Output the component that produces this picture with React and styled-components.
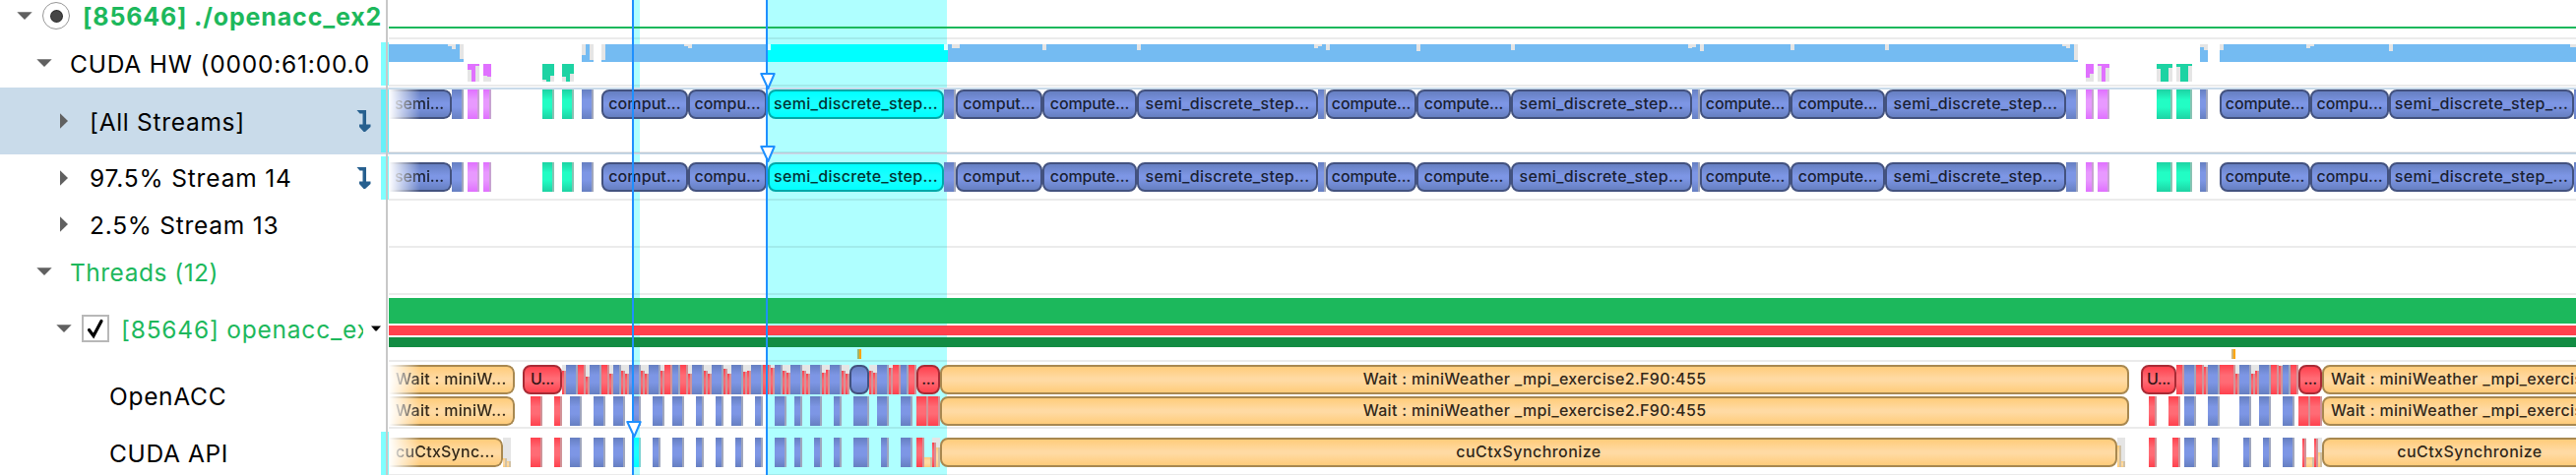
import React from 'react';
import styled, { createGlobalStyle, css } from 'styled-components';

const GlobalStyle = createGlobalStyle`
  * { box-sizing: border-box; }
  body { margin: 0; background: #fff; overflow: hidden; }
`;

/* Time axis: values in the data are window x positions; the chart begins here. */
const ORIGIN = 395;
const VIEW_END = 2617;

const KINDS = {
  kernel: { edge: '#667fc1', mid: '#7d96e5', border: '#43527f', text: '#1a2133' },
  red: { edge: '#ff414d', mid: '#ff6b75', border: '#a82b35', text: '#331417' },
  mint: { edge: '#1dd3a3', mid: '#22fdc4', border: '#138c6c', text: '#052a20' },
  violet: { edge: '#e070ff', mid: '#e899ff', border: '#934aa8', text: '#2d1633' },
  amber: { edge: '#ffcc7a', mid: '#ffdaa3', border: '#a88850', text: '#332818' },
  cyan: { edge: '#00ffff', mid: '#1affff', border: '#00a8a8', text: '#003333' },
};

const K = 'kernel';
const R = 'red';
const A = 'amber';

const KERNELS = [
  { k: K, s: 395, e: 459, t: 'semi...', fade: true, ls: -0.1 },
  { k: K, s: 459, e: 471 },
  { k: 'violet', s: 475, e: 487 },
  { k: 'violet', s: 491, e: 499 },
  { k: 'mint', s: 551, e: 563 },
  { k: 'mint', s: 571, e: 583 },
  { k: K, s: 591, e: 603 },
  { k: K, s: 611, e: 699, t: 'comput...', ls: 0.1 },
  { k: K, s: 699, e: 779, t: 'compu...', ls: 0 },
  { k: 'cyan', s: 780, e: 959, t: 'semi_discrete_step...', ls: 0.3 },
  { k: K, s: 959, e: 971 },
  { k: K, s: 971, e: 1059, t: 'comput...', ls: 0.1 },
  { k: K, s: 1059, e: 1155, t: 'compute...', ls: -0.15 },
  { k: K, s: 1155, e: 1339, t: 'semi_discrete_step...', ls: 0.3 },
  { k: K, s: 1339, e: 1347 },
  { k: K, s: 1347, e: 1439, t: 'compute...', ls: -0.15 },
  { k: K, s: 1439, e: 1535, t: 'compute...', ls: -0.15 },
  { k: K, s: 1535, e: 1719, t: 'semi_discrete_step...', ls: 0.3 },
  { k: K, s: 1719, e: 1727 },
  { k: K, s: 1727, e: 1819, t: 'compute...', ls: -0.15 },
  { k: K, s: 1819, e: 1915, t: 'compute...', ls: -0.15 },
  { k: K, s: 1915, e: 2099, t: 'semi_discrete_step...', ls: 0.3 },
  { k: K, s: 2099, e: 2111 },
  { k: 'violet', s: 2119, e: 2127 },
  { k: 'violet', s: 2131, e: 2143 },
  { k: 'mint', s: 2191, e: 2207 },
  { k: 'mint', s: 2211, e: 2227 },
  { k: K, s: 2235, e: 2243 },
  { k: K, s: 2255, e: 2347, t: 'compute...', ls: -0.15 },
  { k: K, s: 2347, e: 2427, t: 'compu...', ls: 0 },
  { k: K, s: 2427, e: 2615, t: 'semi_discrete_step_...', ls: 0.38 },
  { k: K, s: 2615, e: 2627 },
];

const bars = (rows) => rows.map(([k, s, e, h]) => ({ k, s, e, h }));

const ACC_TOP = [
  { k: A, s: 395, e: 523, t: 'Wait : miniW...', fade: true, ls: 0.3, pad: 7 },
  { k: R, s: 531, e: 571, t: 'U...', ls: -0.5 },
  ...bars([
    [R, 571, 575, 24], [K, 575, 587], [R, 587, 595], [R, 595, 599, 18], [K, 599, 611],
    [R, 611, 619], [R, 619, 623, 21], [K, 623, 631], [R, 631, 635, 24], [R, 635, 639, 21],
    [K, 639, 651], [R, 651, 655, 24], [R, 655, 659, 21], [K, 659, 671], [R, 671, 675, 24],
    [R, 675, 683], [K, 683, 691], [R, 691, 699], [R, 699, 703, 21], [K, 703, 715],
    [R, 715, 719, 24], [R, 719, 723, 21], [K, 723, 735], [R, 735, 739, 26], [R, 739, 743, 21],
    [K, 743, 755], [R, 755, 759, 23], [R, 759, 763, 24], [K, 763, 775], [R, 775, 783],
    [R, 783, 787, 27], [K, 787, 795], [R, 795, 799, 24], [R, 799, 803, 22], [K, 803, 815],
    [R, 815, 819, 24], [R, 819, 823, 21], [K, 823, 835], [R, 835, 839, 22], [R, 839, 843, 25],
    [K, 843, 855], [R, 855, 859, 24], [R, 859, 863, 21],
  ]),
  { k: K, s: 863, e: 883, t: ' ', ls: 0 },
  ...bars([
    [R, 883, 887, 24], [R, 887, 891, 22], [K, 891, 903], [R, 903, 907, 27], [R, 907, 915],
    [K, 915, 923], [R, 923, 931],
  ]),
  { k: R, s: 931, e: 955, t: '...', ls: -0.3 },
  { k: A, s: 955, e: 2163, t: 'Wait : miniWeather _mpi_exercise2.F90:455', ls: 0.33 },
  { k: R, s: 2175, e: 2211, t: 'U...', ls: -0.5 },
  ...bars([
    [R, 2211, 2219], [K, 2219, 2231], [R, 2231, 2239], [R, 2239, 2243, 28], [K, 2243, 2255],
    [R, 2255, 2271], [R, 2271, 2275, 21], [K, 2275, 2287], [R, 2287, 2291, 21],
    [R, 2291, 2295, 24], [K, 2295, 2307], [R, 2307, 2315], [R, 2315, 2319, 29],
    [K, 2319, 2327], [R, 2327, 2335],
  ]),
  { k: R, s: 2335, e: 2359, t: '...', ls: -0.3 },
  { k: A, s: 2359, e: 2725, t: 'Wait : miniWeather _mpi_exercise2.F90:455', ls: 0.33, pad: 7, start: true },
];

const ACC_BOTTOM = [
  { k: A, s: 395, e: 523, t: 'Wait : miniW...', fade: true, ls: 0.3, pad: 7 },
  ...bars([
    [R, 539, 551], [R, 563, 571], [K, 579, 591], [K, 603, 615], [K, 623, 635], [K, 643, 651],
    [K, 663, 675], [K, 683, 695], [K, 707, 715], [K, 727, 735], [K, 743, 755], [K, 767, 775],
    [K, 787, 799], [K, 807, 815], [K, 823, 835], [K, 847, 855], [K, 867, 883], [K, 891, 903],
    [K, 915, 927], [R, 931, 943], [R, 943, 955],
  ]),
  { k: A, s: 955, e: 2163, t: 'Wait : miniWeather _mpi_exercise2.F90:455', ls: 0.33 },
  ...bars([
    [R, 2183, 2191], [R, 2203, 2215], [K, 2219, 2231], [K, 2243, 2255], [K, 2275, 2287],
    [K, 2295, 2307], [K, 2319, 2331], [R, 2335, 2347], [R, 2347, 2359],
  ]),
  { k: A, s: 2359, e: 2725, t: 'Wait : miniWeather _mpi_exercise2.F90:455', ls: 0.33, pad: 7, start: true },
];

const CUDA_API = [
  { k: A, s: 395, e: 511, t: 'cuCtxSync...', fade: true, ls: 0.22, pad: 7 },
  ...bars([
    [A, 511, 515, 9], [A, 515, 519, 6], [R, 539, 551], [R, 563, 571], [K, 579, 591],
    [K, 603, 615], [K, 623, 635], ['cyan', 643, 651], [K, 663, 671], [K, 683, 695],
    [K, 707, 715], [K, 727, 735], [K, 747, 755], [K, 767, 775], [K, 787, 799], [K, 807, 815],
    [K, 827, 835], [K, 847, 855], [K, 867, 883], [K, 895, 903], [K, 915, 927], [R, 931, 939],
  ]),
  { k: A, s: 939, e: 947, h: 10, bare: true },
  ...bars([[R, 947, 951, 25], [A, 951, 955, 20]]),
  { k: A, s: 955, e: 2151, t: 'cuCtxSynchronize', ls: 0.45 },
  ...bars([
    [A, 2151, 2155, 22], [A, 2155, 2159, 6], [R, 2183, 2191], [R, 2207, 2215], [K, 2219, 2231],
    [K, 2247, 2255], [K, 2279, 2287], [K, 2299, 2307], [K, 2319, 2331], [R, 2339, 2343, 29],
  ]),
  { k: A, s: 2343, e: 2351, h: 10, bare: true },
  ...bars([[R, 2351, 2355, 29], [A, 2355, 2359, 15]]),
  { k: A, s: 2359, e: 2659, t: 'cuCtxSynchronize', ls: 0.45 },
];

/* Busy intervals of the load histogram, then the idle share cut from each sample. */
const KERNEL_LOAD = [[395, 471], [591, 603], [611, 780], [963, 2111], [2235, 2243], [2255, 2617]];
const KERNEL_IDLE = [
  [455, 459, 2], [459, 463, 5], [467, 471, 15], [591, 595, 11], [599, 603, 16], [611, 615, 16],
  [695, 699, 2], [699, 703, 4], [967, 975, 4], [1059, 1063, 6], [1155, 1159, 6], [1335, 1339, 4],
  [1339, 1343, 2], [1347, 1351, 6], [1439, 1443, 7], [1535, 1539, 6], [1715, 1719, 4],
  [1719, 1723, 3], [1727, 1731, 7], [1819, 1823, 6], [1915, 1919, 6], [2095, 2099, 2],
  [2099, 2103, 4], [2107, 2111, 16], [2235, 2239, 3], [2239, 2243, 6], [2255, 2259, 6],
  [2343, 2347, 4], [2347, 2351, 2], [2427, 2431, 7], [2611, 2617, 3],
];
const COPY_LOAD = [
  ['#e070ff', 475, 487], ['#e070ff', 491, 499], ['#1dd3a3', 551, 563], ['#1dd3a3', 571, 583],
  ['#e070ff', 2119, 2127], ['#e070ff', 2131, 2143], ['#1dd3a3', 2191, 2207], ['#1dd3a3', 2211, 2227],
];
const COPY_IDLE = [
  [475, 479, 12], [483, 487, 16], [491, 495, 6], [495, 499, 5], [551, 555, 2], [559, 563, 6],
  [571, 575, 5], [579, 583, 8], [2119, 2123, 4], [2123, 2127, 8], [2131, 2135, 16],
  [2139, 2143, 14], [2191, 2195, 13], [2203, 2207, 14], [2211, 2215, 15], [2223, 2227, 16],
];

const Window = styled.main`
  position: relative;
  display: flex;
  width: ${VIEW_END}px;
  height: 483px;
  overflow: hidden;
  background: #fff;
  font-family: Inter, 'Liberation Sans', sans-serif;
  color: #000;
`;

const Tree = styled.nav`
  display: flex;
  flex-direction: column;
  flex: none;
  width: ${ORIGIN}px;
`;

const TreeRow = styled.div`
  flex: none;
  display: flex;
  align-items: center;
  height: ${(p) => p.$h}px;
  padding-left: ${(p) => p.$indent}px;
  background: ${(p) => (p.$selected ? '#c9dbea' : 'transparent')};
  margin-top: ${(p) => (p.$selected ? 1 : 0)}px;
  padding-bottom: ${(p) => p.$lift || 0}px;
`;

const Caret = styled.svg`
  flex: none;
  width: 16px;
  height: 16px;
  margin-right: ${(p) => p.$after}px;
  fill: #606060;
`;

const Label = styled.span`
  padding-top: 1px;
  font-size: ${(p) => (p.$strong ? 25 : 24.5)}px;
  font-weight: ${(p) => (p.$strong ? 700 : 440)};
  letter-spacing: ${(p) => p.$ls}px;
  line-height: 32px;
  white-space: pre;
  overflow: hidden;
  color: ${(p) => (p.$green ? '#1db85c' : '#000')};
  width: ${(p) => (p.$clip ? `${p.$clip}px` : 'auto')};
`;

const Radio = styled.span`
  flex: none;
  display: grid;
  place-items: center;
  width: 28px;
  height: 28px;
  margin-right: 13px;
  border: 1.6px solid #979797;
  border-radius: 50%;
  &::after {
    content: '';
    width: 11px;
    height: 11px;
    border-radius: 50%;
    background: #464646;
    box-shadow: 0 0 0 1px #2b2b2b;
  }
`;

const CheckBox = styled.span`
  flex: none;
  display: grid;
  place-items: center;
  width: 28px;
  height: 28px;
  margin-right: 12px;
  border: 2px solid #b8b8b8;
`;

const JumpIcon = styled.svg`
  flex: none;
  width: 16px;
  height: 24px;
  margin-left: auto;
  margin-right: 17px;
`;

const MenuArrow = styled.svg`
  flex: none;
  width: 10px;
  height: 6px;
  margin-left: 8px;
`;

const Chart = styled.section`
  position: relative;
  flex: 1;
  min-width: 0;
  display: flex;
  flex-direction: column;
`;

const Track = styled.div`
  position: relative;
  flex: none;
  height: ${(p) => p.$h}px;
  padding-top: ${(p) => p.$top || 0}px;
  border-bottom: 2px solid rgba(0, 0, 0, 0.08);
  ${(p) =>
    p.$selected &&
    css`
      border-bottom-width: 1px;
      &::before {
        content: '';
        display: block;
        height: 2px;
        background: #c9dbea;
      }
    `}
`;

const SelectionEdge = styled.div`
  position: relative;
  flex: none;
  height: 2px;
  background: linear-gradient(#bccbd8 50%, #c9dbea 50%);
`;

const ProcessLine = styled.div`
  height: 2px;
  background: #1db85c;
`;

const Lane = styled.div`
  display: flex;
  align-items: stretch;
  height: 30px;
  margin-bottom: ${(p) => p.$after || 0}px;
  overflow: hidden;
`;

const Tick = styled.div`
  flex: none;
  position: relative;
  width: ${(p) => p.$w}px;
  margin-left: ${(p) => p.$gap}px;
  background: linear-gradient(${(p) => `${KINDS[p.$k].edge}, ${KINDS[p.$k].mid} 35%, ${KINDS[p.$k].mid} 60%, ${KINDS[p.$k].edge}`})
    bottom / 100% ${(p) => p.$fill}px no-repeat ${(p) => (p.$well ? '#e5e5e5' : 'transparent')};
  &::after {
    content: '';
    position: absolute;
    right: 0;
    bottom: 0;
    width: 2px;
    height: ${(p) => p.$fill}px;
    background: ${(p) => `color-mix(in srgb, ${KINDS[p.$k].border} 50%, #fafafa)`};
  }
`;

const Span = styled.div`
  flex: none;
  width: ${(p) => p.$w}px;
  margin-left: ${(p) => p.$gap}px;
  padding-left: ${(p) => p.$pad || 0}px;
  border: 2px solid ${(p) => KINDS[p.$k].border};
  border-radius: 8px;
  background: linear-gradient(${(p) => `${KINDS[p.$k].edge}, ${KINDS[p.$k].mid} 45%, ${KINDS[p.$k].mid} 55%, ${KINDS[p.$k].edge}`});
  color: ${(p) => KINDS[p.$k].text};
  font-size: 16px;
  font-weight: 500;
  line-height: 24px;
  letter-spacing: ${(p) => p.$ls}px;
  text-align: ${(p) => (p.$start ? 'left' : 'center')};
  white-space: pre;
  overflow: hidden;
  ${(p) =>
    p.$fade &&
    css`
      border-left: 0;
      border-radius: 0 8px 8px 0;
      mask-image: linear-gradient(90deg, transparent, #000 32px);
    `}
`;

const Histogram = styled.svg`
  display: block;
  width: ${VIEW_END - ORIGIN}px;
  height: 38px;
`;

const ThreadBar = styled.div`
  height: ${(p) => p.$h}px;
  margin-bottom: 2px;
  background: ${(p) => p.$c};
`;

const MarkLane = styled.div`
  display: flex;
  height: 10px;
`;

const Mark = styled.div`
  flex: none;
  width: 4px;
  margin-left: ${(p) => p.$gap}px;
  background: linear-gradient(90deg, ${(p) => p.$dim} 50%, #ffa500 50%);
`;

const Band = styled.div`
  position: absolute;
  top: 0;
  bottom: 0;
  left: ${(p) => p.$x}px;
  width: ${(p) => p.$w}px;
  background: #afffff;
`;

const Cursor = styled.div`
  position: absolute;
  top: 0;
  bottom: 0;
  left: ${(p) => p.$x}px;
  width: 2px;
  background: #1e90ff;
`;

const Pin = styled.svg`
  position: absolute;
  left: ${(p) => p.$x}px;
  top: ${(p) => p.$y}px;
  width: 16px;
  height: 18px;
`;

const Divider = styled.div`
  position: absolute;
  top: 0;
  bottom: 0;
  left: 392px;
  width: 2px;
  background: #c8c8c8;
`;

const RowFlag = styled.div`
  position: absolute;
  left: 387px;
  top: ${(p) => p.$y}px;
  width: 8px;
  height: ${(p) => p.$h}px;
  background: ${(p) => (p.$dark ? '#66f0f8' : '#80ffff')};
`;

function Events({ items, after }) {
  let cursor = ORIGIN;
  return (
    <Lane $after={after}>
      {items.map((it) => {
        const gap = it.s - cursor;
        const w = it.e - it.s;
        cursor = it.e;
        if (it.t) {
          return (
            <Span
              key={it.s}
              $k={it.k}
              $w={w}
              $gap={gap}
              $ls={it.ls}
              $fade={it.fade}
              $start={it.fade || it.start}
              $pad={it.fade ? it.pad || 6 : it.pad}
            >
              {it.t}
            </Span>
          );
        }
        return <Tick key={it.s} $k={it.k} $w={w} $gap={gap} $fill={it.h || 30} $well={Boolean(it.h) && !it.bare} />;
      })}
    </Lane>
  );
}

function Down({ after }) {
  return (
    <Caret $after={after} viewBox="0 0 16 16">
      <path d="M0.3 4.3H15.7L8 12Z" />
    </Caret>
  );
}

function Right({ after }) {
  return (
    <Caret $after={after} viewBox="0 0 16 16">
      <path d="M4 0.3V15.7L12 8Z" />
    </Caret>
  );
}

function Jump() {
  return (
    <JumpIcon viewBox="0 0 16 24">
      <path d="M0.5 1H10V15.5H14.5V18L9 23H7.5L3 18V15.5H6.5V4.5H3.5Z" fill="#27608f" />
    </JumpIcon>
  );
}

function LoadChart() {
  const x = (v) => v - ORIGIN;
  return (
    <Histogram viewBox="0 0 2222 38" shapeRendering="crispEdges">
      {KERNEL_LOAD.map(([s, e]) => (
        <rect key={s} x={x(s)} y="0" width={e - s} height="18" fill="#74bbf2" />
      ))}
      <rect x={x(780)} y="0" width="183" height="18" fill="#00ffff" />
      <rect x={x(780)} y="0" width="3" height="6" fill="#d9ffff" />
      <rect x={x(959)} y="0" width="4" height="6" fill="#d9ffff" />
      {KERNEL_IDLE.map(([s, e, h]) => (
        <rect key={s} x={x(s)} y="0" width={e - s} height={h} fill="#e5e5e5" />
      ))}
      {COPY_LOAD.map(([c, s, e]) => (
        <rect key={s} x={x(s)} y="20" width={e - s} height="18" fill={c} />
      ))}
      {COPY_IDLE.map(([s, e, h]) => (
        <rect key={s} x={x(s)} y={38 - h} width={e - s} height={h} fill="#e5e5e5" />
      ))}
    </Histogram>
  );
}

function CursorPin({ x, y }) {
  return (
    <Pin $x={x} $y={y} viewBox="0 0 16 18">
      <path d="M1.3 1H14.7L8.3 16Z" fill="#fff" stroke="#1e90ff" strokeWidth="2" strokeLinejoin="round" />
    </Pin>
  );
}

export default function App() {
  return (
    <Window>
      <GlobalStyle />
      <Tree>
        <TreeRow $h={40} $indent={17} $lift={8}>
          <Down after={10} />
          <Radio />
          <Label $strong $green $ls={0.84} $clip={306}>[85646] ./openacc_ex2</Label>
        </TreeRow>
        <TreeRow $h={48} $indent={37}>
          <Down after={18} />
          <Label $ls={0.8}>CUDA HW (0000:61:00.0</Label>
        </TreeRow>
        <TreeRow $h={68} $indent={57} $selected>
          <Right after={18} />
          <Label $ls={0.7}>[All Streams]</Label>
          <Jump />
        </TreeRow>
        <TreeRow $h={47} $indent={57}>
          <Right after={18} />
          <Label $ls={0.85}>97.5% Stream 14</Label>
          <Jump />
        </TreeRow>
        <TreeRow $h={48} $indent={57}>
          <Right after={18} />
          <Label $ls={0.75}>2.5% Stream 13</Label>
        </TreeRow>
        <TreeRow $h={48} $indent={37}>
          <Down after={18} />
          <Label $green $ls={0.5}>Threads (12)</Label>
        </TreeRow>
        <TreeRow $h={68} $indent={57}>
          <Down after={10} />
          <CheckBox>
            <svg width="20" height="22" viewBox="0 0 20 22" fill="none" stroke="#000" strokeWidth="3.2" strokeLinecap="round">
              <path d="M3.5 12.5L8 18.5L16 3.5" />
            </svg>
          </CheckBox>
          <Label $green $ls={0.78} $clip={246}>[85646] openacc_ex</Label>
          <MenuArrow viewBox="0 0 10 6">
            <path d="M0 0.5H10L5.6 5.5H4.4Z" />
          </MenuArrow>
        </TreeRow>
        <TreeRow $h={68} $indent={111}>
          <Label $ls={0.7}>OpenACC</Label>
        </TreeRow>
        <TreeRow $h={48} $indent={111}>
          <Label $ls={0.65}>CUDA API</Label>
        </TreeRow>
      </Tree>

      <Chart>
        <Band $x={249} $w={6} />
        <Band $x={385} $w={182} />
        <Track $h={40} $top={27}>
          <ProcessLine />
        </Track>
        <Track $h={48} $top={5}>
          <LoadChart />
        </Track>
        <Track $h={67} $top={1} $selected>
          <Events items={KERNELS} />
        </Track>
        <SelectionEdge />
        <Track $h={47} $top={8}>
          <Events items={KERNELS} />
        </Track>
        <Track $h={48} />
        <Track $h={48} />
        <Track $h={68} $top={3}>
          <ThreadBar $h={26} $c="#1cb85c" />
          <ThreadBar $h={10} $c="#ff414d" />
          <ThreadBar $h={10} $c="#128c43" />
          <MarkLane>
            <Mark $gap={476} $dim="#9db56f" />
            <Mark $gap={1392} $dim="#d3b678" />
          </MarkLane>
        </Track>
        <Track $h={68} $top={3}>
          <Events items={ACC_TOP} after={2} />
          <Events items={ACC_BOTTOM} />
        </Track>
        <Track $h={48} $top={9}>
          <Events items={CUDA_API} />
        </Track>
      </Chart>

      <RowFlag $y={43} $h={44} />
      <RowFlag $y={91} $h={64} $dark />
      <RowFlag $y={159} $h={44} />
      <RowFlag $y={439} $h={44} />
      <Divider />
      <Cursor $x={642} />
      <Cursor $x={778} />
      <CursorPin x={772} y={74} />
      <CursorPin x={772} y={148} />
      <CursorPin x={636} y={428} />
    </Window>
  );
}
